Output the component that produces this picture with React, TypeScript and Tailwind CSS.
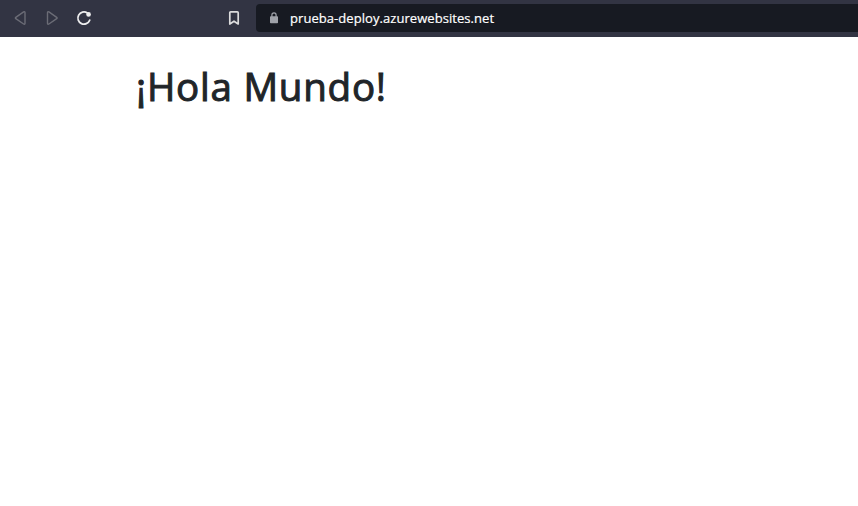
function Toolbar() {
  return (
    <header className="flex h-[37px] w-full items-start bg-[#323443] pt-1">
      <nav className="flex h-7 w-[256px] shrink-0 items-center pl-3">
        <svg className="h-4 w-4 text-[#6b6c76]" viewBox="0 0 16 16" fill="none" stroke="currentColor" strokeWidth="1.4" strokeLinejoin="round"><path d="M11.6 1.9 Q13 1.2 13 2.8V13.2Q13 14.8 11.6 14L3.8 8.7Q3 8 3.8 7.3Z" /></svg>
        <svg className="ml-4 h-4 w-4 text-[#6b6c76]" viewBox="0 0 16 16" fill="none" stroke="currentColor" strokeWidth="1.4" strokeLinejoin="round"><path d="M4.9 1.9 Q3.5 1.2 3.5 2.8V13.2Q3.5 14.8 4.9 14L12.7 8.7Q13.5 8 12.7 7.3Z" /></svg>
        <svg className="ml-4 h-4 w-4 text-[#ededee]" viewBox="0 0 16 16" fill="none" stroke="currentColor" strokeWidth="1.8" strokeLinecap="round"><path d="M13.7 10.2A6.1 6.1 0 1 1 11.3 2.9" /><circle cx="12.6" cy="4.4" r="2.3" fill="currentColor" stroke="none" /></svg>
        <svg className="ml-[134px] h-4 w-4 text-[#dcdcdd]" viewBox="0 0 16 16" fill="none" stroke="currentColor" strokeWidth="1.7" strokeLinejoin="round"><path d="M4.7 1.9h6.6q.9 0 .9.9V14L8 11.2 3.8 14V2.8q0-.9.9-.9Z" /></svg>
      </nav>
      <div className="flex h-7 flex-1 items-center rounded-l bg-[#171a22] pl-3">
        <svg className="h-3 w-3 text-[#9fa2a9]" viewBox="0 0 12 12"><rect x="2" y="4.3" width="8" height="6.9" rx="0.8" fill="currentColor" /><path d="M3.9 5V3a2.1 2.1 0 0 1 4.2 0v2" fill="none" stroke="currentColor" strokeWidth="1.2" /></svg>
        <span className="ml-[10px] pt-px font-['Open_Sans',sans-serif] text-[13px] tracking-[0.06px] text-white [-webkit-text-stroke:0.2px_white]">prueba-deploy.azurewebsites.net</span>
      </div>
    </header>
  );
}

export default function App() {
  return (
    <div className="flex h-[506px] w-full flex-col bg-white">
      <Toolbar />
      <main className="pl-[136px] pt-[25px]">
        <h1 className="font-['Open_Sans',sans-serif] text-[38.5px] leading-[48px] tracking-[0.77px] font-medium text-[#212529] [-webkit-text-stroke:1px_#212529]">¡Hola Mundo!</h1>
      </main>
    </div>
  );
}
